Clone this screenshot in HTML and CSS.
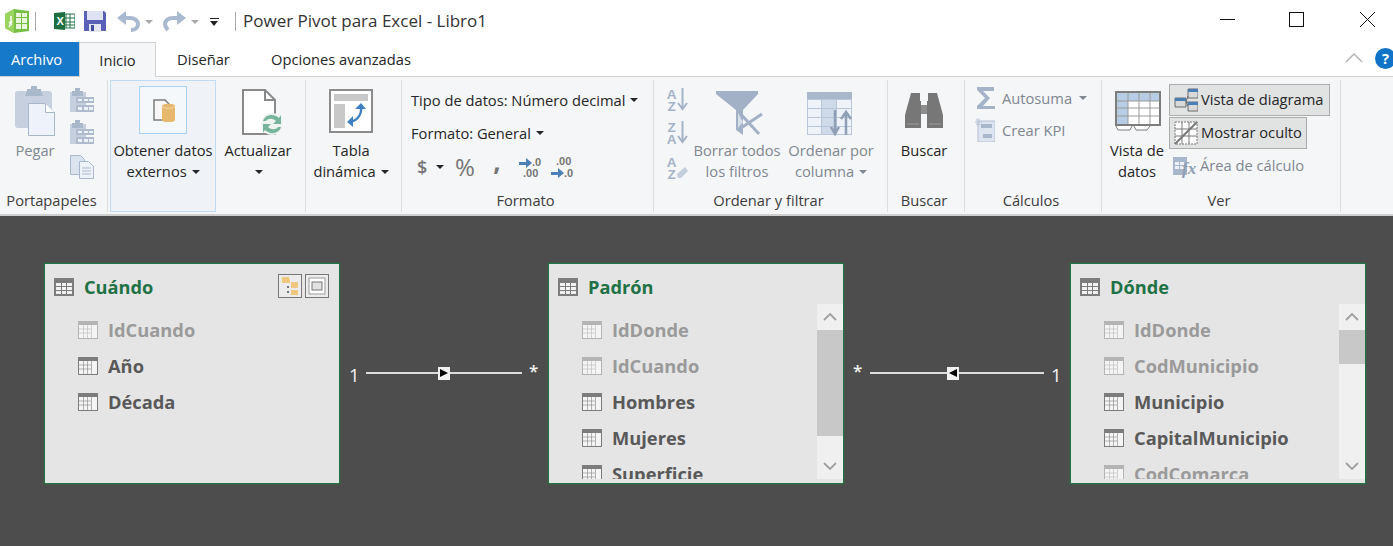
FILE: index.html
```html
<!DOCTYPE html>
<html lang="es">
<head>
  <meta charset="UTF-8" />
  <title>Power Pivot para Excel - Libro1</title>
  <link rel="stylesheet" href="styles.css">
</head>
<body>
  <svg class="defs" width="0" height="0">
    <symbol id="i-table" viewBox="0 0 20 18">
      <rect width="20" height="18" fill="currentColor" />
      <path d="M2 5h5v3H2zM8 5h4v3H8zM13 5h5v3h-5zM2 9h5v3H2zM8 9h4v3H8zM13 9h5v3h-5zM2 13h5v3H2zM8 13h4v3H8zM13 13h5v3h-5z" fill="#f2f2f2" />
    </symbol>
    <symbol id="i-field" viewBox="0 0 20 18">
      <rect width="20" height="18" fill="currentColor" />
      <rect x="1" y="4" width="18" height="13" fill="#f4f4f4" />
      <path d="M1 8h12M1 12h12M5.500 4v13M9.500 4v13M13.500 4v13" stroke="currentColor" stroke-opacity=".55" fill="none" />
    </symbol>
    <symbol id="i-clip" viewBox="0 0 24 24">
      <path d="M0 4h16v20H0z" fill="#c5cfdd" />
      <path d="M5 0h5v3h3v5H2V3h3z" fill="#a9b7ca" />
      <path d="M6 9h18v6H6zM6 17h18v7H6z" fill="#aebbcd" />
      <path d="M8 11h4v2H8zM14 11h4v2h-4zM19 11h4v2h-4zM8 19h4v3H8zM14 19h4v3h-4zM19 19h4v3h-4z" fill="#eef2f8" />
    </symbol>
    <symbol id="i-chevron" viewBox="0 0 14 8">
      <path d="M1 7l6-6 6 6" fill="none" stroke="#a0a0a0" stroke-width="1.800" />
    </symbol>
  </svg>

  <header class="titlebar">
    <svg class="qat-icon app-icon" width="24" height="24" viewBox="0 0 24 24">
      <path d="M0 5l9-5 15 2v20L9 24l-9-5z" fill="#78bf45" />
      <path d="M0 5l9-5v24l-9-5z" fill="#9ad55f" />
      <path d="M11 4h5v4h-5zM17 4h5v4h-5zM11 9h5v5h-5zM17 9h5v5h-5zM11 15h5v5h-5zM17 15h5v5h-5z" fill="#e9f6dc" />
      <path d="M6 7v8l-2-2M4 18l3-6" fill="none" stroke="#fff" stroke-width="1.500" />
    </svg>
    <span class="qat-sep"></span>
    <svg class="qat-icon excel-icon" width="21" height="18" viewBox="0 0 21 18">
      <path d="M9 2h12v14H9z" fill="#fff" stroke="#217346" />
      <path d="M12 2v14M16 2v14M9 6h12M9 10h12M9 13h12" stroke="#217346" fill="none" />
      <path d="M0 1l11-1v18L0 17z" fill="#1d6f42" />
      <text x="2.500" y="13" class="excel-x">X</text>
    </svg>
    <svg class="qat-icon save-icon" width="22" height="22" viewBox="0 0 22 22">
      <path d="M0 1h20l2 2v18H0z" fill="#5a5fb8" />
      <path d="M3 1h16v9H3z" fill="#dfe2f5" />
      <path d="M5 14h12v8H5z" fill="#e4e6f2" />
      <path d="M7 15h3v6H7z" fill="#454a9c" />
    </svg>
    <svg class="qat-icon undo-icon" width="23" height="21" viewBox="0 0 23 21">
      <path d="M0 7l9-7v14z" fill="#a9b9cf" />
      <path d="M7 7h6c5 0 8 3 8 6s-2 6-7 6" fill="none" stroke="#a9b9cf" stroke-width="4" />
    </svg>
    <span class="caret caret-qat"></span>
    <svg class="qat-icon redo-icon" width="23" height="21" viewBox="0 0 23 21">
      <path d="M23 7l-9-7v14z" fill="#a9b9cf" />
      <path d="M16 7h-6c-5 0-8 3-8 6 0 2 1 4 3 6" fill="none" stroke="#a9b9cf" stroke-width="4" />
    </svg>
    <span class="caret caret-qat"></span>
    <span class="customize"><span></span></span>
    <span class="qat-sep title-sep"></span>
    <span class="doc-title">Power Pivot para Excel - Libro1</span>
    <div class="window-controls">
      <svg width="15" height="15" viewBox="0 0 15 15"><path d="M0 7.500h15" stroke="#111" /></svg>
      <svg width="15" height="15" viewBox="0 0 15 15"><rect x=".5" y=".5" width="14" height="14" fill="none" stroke="#111" /></svg>
      <svg width="15" height="15" viewBox="0 0 15 15"><path d="M0 0l15 15M15 0L0 15" stroke="#111" /></svg>
    </div>
  </header>

  <nav class="tabs">
    <span class="tab tab-file">Archivo</span>
    <span class="tab tab-active">Inicio</span>
    <span class="tab tab-design">Diseñar</span>
    <span class="tab tab-adv">Opciones avanzadas</span>
    <svg class="collapse" width="18" height="10" viewBox="0 0 18 10"><path d="M1 9l8-8 8 8" fill="none" stroke="#b4b4b4" stroke-width="1.500" /></svg>
    <span class="help">?</span>
  </nav>

  <section class="ribbon">
    <div class="group g-clip">
      <div class="group-body">
        <div class="big off b-paste">
          <svg width="40" height="56" viewBox="0 0 40 56">
            <path d="M0 10a3 3 0 0 1 3-3h31a3 3 0 0 1 3 3v34H3a3 3 0 0 1-3-3z" fill="#c6d0de" />
            <path d="M12 7V5h4V2h6v3h4v2l2 5H10z" fill="#aab8cb" />
            <path d="M13.500 19.500h17l9 9v23h-26z" fill="#edf2fb" stroke="#a7b6ca" />
            <path d="M30.500 19.500v9h9" fill="#fff" stroke="#a7b6ca" />
          </svg>
          <span>Pegar</span>
        </div>
        <div class="clip-col">
          <svg width="24" height="24"><use href="#i-clip" /></svg>
          <svg width="24" height="24"><use href="#i-clip" /></svg>
          <svg width="24" height="24" viewBox="0 0 24 24">
            <path d="M.5.5h10l4 4v15H.500z" fill="#dbe3ee" stroke="#a9b7ca" />
            <path d="M9.500 6.500h9l5 5v12h-14z" fill="#eef2f9" stroke="#a9b7ca" />
            <path d="M12 13h9M12 16h9M12 19h9" stroke="#a9b7ca" />
          </svg>
        </div>
      </div>
      <div class="group-label">Portapapeles</div>
    </div>

    <div class="group g-data">
      <div class="group-body">
        <div class="hover-box">
          <div class="hover-icon">
            <svg width="24" height="24" viewBox="0 0 24 24">
              <path d="M3 2h11l4 4v16H3z" fill="#f7f7f7" stroke="#7d7d7d" stroke-width="1.500" />
              <path d="M11 8c0-3 13-3 13 0v14c0 3-13 3-13 0z" fill="#e6b96f" />
              <path d="M11 8c0 3 13 3 13 0" fill="none" stroke="#f3d7a8" />
            </svg>
          </div>
          <span>Obtener datos</span>
          <span>externos <i class="caret"></i></span>
        </div>
        <div class="big b-refresh">
          <svg width="42" height="56" viewBox="0 0 42 56">
            <path d="M1 6h22l10 10v34H1z" fill="#fff" stroke="#8a8a8a" stroke-width="2" />
            <path d="M23 6v10h10" fill="none" stroke="#8a8a8a" stroke-width="2" />
            <circle cx="30" cy="40" r="11" fill="#eef4f1" />
            <path d="M21 37c2-7 11-8 16-3l2-3v9h-8l3-3c-3-3-8-3-10 0zM39 43c-2 7-11 8-16 3l-2 3v-9h8l-3 3c3 3 8 3 10 0z" fill="#76b49b" />
          </svg>
          <span>Actualizar</span>
          <span><i class="caret"></i></span>
        </div>
      </div>
    </div>

    <div class="group g-pivot">
      <div class="group-body">
        <div class="big b-pivot">
          <svg width="44" height="56" viewBox="0 0 44 56">
            <rect x="1" y="6" width="42" height="42" fill="#fff" stroke="#8c8c8c" stroke-width="2" />
            <path d="M5 10h34v7H5zM5 20h11v24H5z" fill="#c8c8c8" />
            <path d="M32 22c1 8-3 14-11 16" fill="none" stroke="#3f80c2" stroke-width="2.500" />
            <path d="M26 25l6-6 5 6zM24 32l-6 6 6 5z" fill="#3f80c2" />
          </svg>
          <span>Tabla</span>
          <span>dinámica <i class="caret"></i></span>
        </div>
      </div>
    </div>

    <div class="group g-format">
      <div class="group-body format-body">
        <div class="format-row">Tipo de datos: Número decimal <i class="caret"></i></div>
        <div class="format-row">Formato: General <i class="caret"></i></div>
        <div class="format-row format-tools">
          <span class="sym sym-dollar">$</span>
          <i class="caret"></i>
          <span class="sym sym-pct">%</span>
          <span class="sym sym-comma">,</span>
          <svg width="24" height="22" viewBox="0 0 24 22">
            <path d="M0 6h7V2l6 5-6 5V9H0z" fill="#4b7fb5" />
            <text x="13" y="10" class="dec">.0</text>
            <text x="4" y="21" class="dec">.00</text>
          </svg>
          <svg width="24" height="22" viewBox="0 0 24 22">
            <text x="5" y="9" class="dec">.00</text>
            <path d="M0 16h7v-4l6 5-6 5v-3H0z" fill="#4b7fb5" />
            <text x="13" y="21" class="dec">.0</text>
          </svg>
        </div>
      </div>
      <div class="group-label">Formato</div>
    </div>

    <div class="group g-sort">
      <div class="group-body">
        <div class="sort-col">
          <div class="sort-icon">
            <span class="az">AZ</span>
            <svg width="11" height="24" viewBox="0 0 11 24"><path d="M5.500 1v20M1 16l4.500 6 4.500-6" fill="none" stroke="#a5b3c8" stroke-width="2" /></svg>
          </div>
          <div class="sort-icon">
            <span class="az">ZA</span>
            <svg width="11" height="24" viewBox="0 0 11 24"><path d="M5.500 1v20M1 16l4.500 6 4.500-6" fill="none" stroke="#a5b3c8" stroke-width="2" /></svg>
          </div>
          <div class="sort-icon">
            <span class="az">AZ</span>
            <svg width="11" height="24" viewBox="0 0 11 24"><path d="M0 19l8-7 3 4-7 7H1z" fill="#c3cedd" /></svg>
          </div>
        </div>
        <div class="big off b-filter">
          <svg width="47" height="56" viewBox="0 0 47 56">
            <path d="M0 7h42v3L27 26v25l-7-5V26L0 10z" fill="#a3b1c6" />
            <path d="M21 26l22 24M46 30L22 46" fill="none" stroke="#a3b1c6" stroke-width="3" />
            <path d="M22 29l5 9-5 6z" fill="#d6deea" />
          </svg>
          <span>Borrar todos</span>
          <span>los filtros</span>
        </div>
        <div class="big off b-bycol">
          <svg width="48" height="56" viewBox="0 0 48 56">
            <path d="M0 8h45v7H0z" fill="#a9b7cb" />
            <path d="M0 15h45v36H0z" fill="#b9c6d8" />
            <path d="M1 16h13v8H1zM30 16h14v8H30zM1 25h13v8H1zM30 25h14v8H30zM1 34h13v8H1zM30 34h14v8H30zM1 43h13v7H1zM30 43h14v7H30z" fill="#eef3fa" />
            <path d="M15 16h14v8H15zM15 25h14v8H15zM15 34h14v8H15zM15 43h14v7H15z" fill="#cfdae8" />
            <path d="M28 26v23M24 43l4 7 4-7" fill="none" stroke="#8f9fb6" stroke-width="2.500" />
            <path d="M39 51V29M34 35l5-7 5 7" fill="none" stroke="#8f9fb6" stroke-width="2.500" />
          </svg>
          <span>Ordenar por</span>
          <span>columna <i class="caret"></i></span>
        </div>
      </div>
      <div class="group-label">Ordenar y filtrar</div>
    </div>

    <div class="group g-find">
      <div class="group-body">
        <div class="big b-find">
          <svg width="40" height="56" viewBox="0 0 40 56">
            <path d="M7 9h9v8h1v27H1V31zM24 9h9l6 22v13H23V17h1z" fill="#777" />
            <path d="M17 21h6v9h-6z" fill="#8f8f8f" />
            <path d="M3 40h12M25 40h12" stroke="#9e9e9e" />
          </svg>
          <span>Buscar</span>
        </div>
      </div>
      <div class="group-label">Buscar</div>
    </div>

    <div class="group g-calc">
      <div class="group-body calc-body">
        <div class="tool-row off">
          <svg width="20" height="24" viewBox="0 0 20 24"><path d="M2 1h17v4H8l7 7-7 8h12v3H2v-3l8-8-8-8z" fill="#a5b3c9" /></svg>
          <span>Autosuma</span>
          <i class="caret"></i>
        </div>
        <div class="tool-row off">
          <svg width="20" height="24" viewBox="0 0 20 24">
            <path d="M3 3h17v21H3z" fill="#dde5f0" stroke="#b4c1d3" />
            <path d="M6 6h11v4H6zM8 16h9v4H8z" fill="#a9b7cb" />
            <path d="M3 0v8M0 4h7M1 1l4 6M5 1L1 7" stroke="#bcc8d8" />
          </svg>
          <span>Crear KPI</span>
        </div>
      </div>
      <div class="group-label">Cálculos</div>
    </div>

    <div class="group g-view">
      <div class="group-body">
        <div class="big b-grid">
          <svg width="46" height="56" viewBox="0 0 46 56">
            <path d="M0 7h46v35H0z" fill="#7d7d7d" />
            <path d="M2 9h42v31H2z" fill="#fff" />
            <path d="M2 9h42v8H2zM2 17h11v23H2z" fill="#b7cde6" />
            <path d="M13 9v31M24 9v31M35 9v31M2 17h42M2 24h42M2 32h42" stroke="#9a9a9a" fill="none" />
            <path d="M1 42l2 4h12l2-4M19 42l2 4h11l3-4" fill="#fff" stroke="#7d7d7d" />
          </svg>
          <span>Vista de</span>
          <span>datos</span>
        </div>
        <div class="view-col">
          <div class="tool-row toggled">
            <svg width="24" height="24" viewBox="0 0 24 24">
              <path d="M1 10h11v9H1zM14 1h10v9H14zM14 14h10v9H14z" fill="#d9d9d9" stroke="#6b6b6b" />
              <path d="M1 10h11v3H1zM14 1h10v3H14zM14 14h10v3H14z" fill="#4b7fb5" />
              <path d="M12 14h2M12 14l2-6M12 14l2 4" stroke="#6b6b6b" fill="none" />
            </svg>
            <span>Vista de diagrama</span>
          </div>
          <div class="tool-row toggled toggled-short">
            <svg width="24" height="24" viewBox="0 0 24 24">
              <rect x="1" y="1" width="22" height="22" fill="#fff" stroke="#777" stroke-dasharray="2 1" />
              <path d="M1 8h22M1 15h22M8 1v22M15 1v22" stroke="#777" />
              <path d="M1 23L23 1" stroke="#777" stroke-width="2" />
            </svg>
            <span>Mostrar oculto</span>
          </div>
          <div class="tool-row off">
            <svg width="24" height="24" viewBox="0 0 24 24">
              <path d="M0 3h14v18H0z" fill="#a9b7cb" />
              <path d="M2 8h4v3H2zM7 8h4v3H7zM2 12h4v3H2zM7 12h4v3H7z" fill="#eef2f8" />
              <text x="9" y="20" class="fx">fx</text>
            </svg>
            <span>Área de cálculo</span>
          </div>
        </div>
      </div>
      <div class="group-label">Ver</div>
    </div>
  </section>

  <main class="canvas">
    <article class="card card-when">
      <div class="card-head">
        <svg width="20" height="18"><use href="#i-table" /></svg>
        <h2>Cuándo</h2>
        <div class="card-btns">
          <span class="card-btn">
            <svg width="18" height="18" viewBox="0 0 18 18">
              <path d="M1 0h7v2h1v4H1zM10 5h7v6h-7zM10 13h7v5h-7z" fill="#f0c77e" />
              <path d="M6 9h2v2H6zM6 14h2v2H6z" fill="#777" />
            </svg>
          </span>
          <span class="card-btn">
            <svg width="18" height="18" viewBox="0 0 18 18">
              <rect x="1" y="1" width="16" height="16" fill="#fff" stroke="#999" />
              <rect x="4" y="5" width="10" height="8" fill="#e2e2e2" stroke="#777" />
            </svg>
          </span>
        </div>
      </div>
      <div class="card-body">
        <ul class="fields">
          <li class="hidden-field"><svg width="20" height="18"><use href="#i-field" /></svg><span>IdCuando</span></li>
          <li><svg width="20" height="18"><use href="#i-field" /></svg><span>Año</span></li>
          <li><svg width="20" height="18"><use href="#i-field" /></svg><span>Década</span></li>
        </ul>
      </div>
    </article>

    <div class="link link-left">
      <span class="link-one">1</span>
      <span class="link-line seg-72"></span>
      <span class="link-mark">
        <svg width="8" height="8" viewBox="0 0 8 8"><path d="M0 0l8 4-8 4z" fill="#000" /></svg>
      </span>
      <span class="link-line seg-72"></span>
      <span class="link-many">*</span>
    </div>

    <article class="card card-fact">
      <div class="card-head">
        <svg width="20" height="18"><use href="#i-table" /></svg>
        <h2>Padrón</h2>
      </div>
      <div class="card-body">
        <ul class="fields">
          <li class="hidden-field"><svg width="20" height="18"><use href="#i-field" /></svg><span>IdDonde</span></li>
          <li class="hidden-field"><svg width="20" height="18"><use href="#i-field" /></svg><span>IdCuando</span></li>
          <li><svg width="20" height="18"><use href="#i-field" /></svg><span>Hombres</span></li>
          <li><svg width="20" height="18"><use href="#i-field" /></svg><span>Mujeres</span></li>
          <li><svg width="20" height="18"><use href="#i-field" /></svg><span>Superficie</span></li>
        </ul>
        <div class="scrollbar">
          <span class="sb-btn"><svg width="14" height="8"><use href="#i-chevron" /></svg></span>
          <span class="sb-thumb thumb-long"></span>
          <span class="sb-track"></span>
          <span class="sb-btn sb-down"><svg width="14" height="8"><use href="#i-chevron" /></svg></span>
        </div>
      </div>
    </article>

    <div class="link link-right">
      <span class="link-many">*</span>
      <span class="link-line seg-77"></span>
      <span class="link-mark">
        <svg width="8" height="8" viewBox="0 0 8 8"><path d="M8 0L0 4l8 4z" fill="#000" /></svg>
      </span>
      <span class="link-line seg-85"></span>
      <span class="link-one">1</span>
    </div>

    <article class="card card-where">
      <div class="card-head">
        <svg width="20" height="18"><use href="#i-table" /></svg>
        <h2>Dónde</h2>
      </div>
      <div class="card-body">
        <ul class="fields">
          <li class="hidden-field"><svg width="20" height="18"><use href="#i-field" /></svg><span>IdDonde</span></li>
          <li class="hidden-field"><svg width="20" height="18"><use href="#i-field" /></svg><span>CodMunicipio</span></li>
          <li><svg width="20" height="18"><use href="#i-field" /></svg><span>Municipio</span></li>
          <li><svg width="20" height="18"><use href="#i-field" /></svg><span>CapitalMunicipio</span></li>
          <li class="hidden-field"><svg width="20" height="18"><use href="#i-field" /></svg><span>CodComarca</span></li>
        </ul>
        <div class="scrollbar">
          <span class="sb-btn"><svg width="14" height="8"><use href="#i-chevron" /></svg></span>
          <span class="sb-thumb thumb-short"></span>
          <span class="sb-track"></span>
          <span class="sb-btn sb-down"><svg width="14" height="8"><use href="#i-chevron" /></svg></span>
        </div>
      </div>
    </article>
  </main>
</body>
</html>
```

FILE: styles.css
```css
* {
  margin: 0;
  padding: 0;
  box-sizing: border-box;
}

body {
  width: 1393px;
  height: 546px;
  overflow: hidden;
  background-color: #fff;
  color: #262626;
  font-family: "Open Sans", "Liberation Sans", sans-serif;
  font-size: 14.700px;
}

.defs {
  position: absolute;
}

svg {
  display: block;
  flex-shrink: 0;
}

.caret {
  display: inline-block;
  width: 0;
  height: 0;
  border-left: 4px solid transparent;
  border-right: 4px solid transparent;
  border-top: 4px solid #262626;
  vertical-align: 3px;
  margin-left: 1px;
}

/* title bar */
.titlebar {
  display: flex;
  align-items: center;
  height: 42px;
  padding-left: 5px;
}

.qat-sep {
  width: 1px;
  height: 19px;
  margin: 0 18px 0 6px;
  background-color: #a8a8a8;
}

.excel-icon {
  margin-right: 9px;
}

.excel-x {
  font-family: "Liberation Sans", sans-serif;
  font-size: 11px;
  font-weight: bold;
  fill: #fff;
}

.save-icon {
  margin-right: 11px;
}

.caret-qat {
  margin: 2px 10px 0 5px;
  border-top-color: #a8a8a8;
}

.customize {
  display: block;
  width: 9px;
  height: 9px;
  margin: 2px 0 0 1px;
  border-top: 1px solid #222;
}

.customize span {
  display: block;
  width: 0;
  height: 0;
  margin-top: 2px;
  border-left: 4.500px solid transparent;
  border-right: 4.500px solid transparent;
  border-top: 5px solid #222;
}

.title-sep {
  margin: 0 7px 0 16px;
}

.doc-title {
  margin-top: -2px;
  font-size: 17px;
  color: #333;
}

.window-controls {
  display: flex;
  gap: 55px;
  margin-left: auto;
  margin-right: 18px;
  margin-top: -4px;
}

.window-controls svg:nth-child(2) {
  margin: 0 1px 0 -1px;
}

/* tabs */
.tabs {
  display: flex;
  align-items: stretch;
  height: 34px;
}

.tab {
  display: flex;
  align-items: center;
  justify-content: center;
}

.tab-file {
  width: 79px;
  padding-right: 6px;
  background-color: #1779c9;
  color: #fff;
}

.tab-active {
  width: 77px;
  margin-bottom: -1px;
  background-color: #f5f6f7;
  border: 1px solid #d2d2d2;
  border-bottom: none;
  position: relative;
}

.tab-design {
  width: 95px;
}

.tab-adv {
  padding-left: 20px;
}

.collapse {
  margin: 11px 0 0 auto;
}

.help {
  width: 21px;
  height: 21px;
  margin: 6px -3px 0 12px;
  flex-shrink: 0;
  border-radius: 50%;
  background-color: #1173c7;
  color: #fff;
  font-size: 15px;
  font-weight: bold;
  line-height: 21px;
  text-align: center;
}

/* ribbon */
.ribbon {
  display: flex;
  height: 140px;
  padding-top: 3px;
  background-color: #f5f6f7;
  border-top: 1px solid #d2d2d2;
  border-bottom: 2px solid #cfcfcf;
}

.group {
  display: flex;
  flex-direction: column;
  height: 132px;
  border-right: 1px solid #dcdfe2;
}

.group-body {
  flex: 1;
  display: flex;
  align-items: flex-start;
  padding-top: 4px;
}

.group-label {
  height: 22px;
  padding-right: 4px;
  line-height: 20px;
  text-align: center;
  color: #3d3d3d;
  white-space: nowrap;
}

.g-clip { width: 108px; }
.g-data { width: 198px; }
.g-pivot { width: 96px; }
.g-format { width: 252px; }
.g-sort { width: 234px; }
.g-find { width: 77px; }
.g-calc { width: 137px; }
.g-view { width: 239px; }

.big {
  display: flex;
  flex-direction: column;
  align-items: center;
  line-height: 21px;
  text-align: center;
  white-space: nowrap;
}

.big svg {
  height: 56px;
}

.off {
  color: #7f8791;
}

.off .caret {
  border-top-color: #7f8791;
}

.b-paste { width: 70px; }
.b-refresh { width: 84px; }
.b-refresh svg { margin-left: 9px; }
.b-pivot { width: 90px; }
.b-filter { width: 86px; }
.b-filter svg { margin-left: 5px; }
.b-bycol { width: 86px; margin-left: 8px; }
.b-find { width: 72px; }
.b-grid { width: 56px; margin-left: 7px; }
.b-grid svg { margin-left: 2px; }

.clip-col {
  display: flex;
  flex-direction: column;
  gap: 8px;
  padding-top: 4px;
}

.clip-col svg:last-child {
  margin-top: 3px;
}

/* highlighted button */
.g-data .group-body {
  padding-top: 0;
  padding-left: 2px;
}

.g-data .b-refresh {
  padding-top: 4px;
}

.hover-box {
  display: flex;
  flex-direction: column;
  align-items: center;
  width: 106px;
  height: 132px;
  line-height: 21px;
  background-color: #eff3f8;
  border: 1px solid #bfdcf4;
  white-space: nowrap;
}

.hover-icon {
  display: flex;
  align-items: center;
  justify-content: center;
  width: 48px;
  height: 48px;
  margin: 5px 0 6px;
  background-color: #f5f8fb;
  border: 1px solid #a9d3f5;
}

/* formato */
.format-body {
  flex-direction: column;
  padding-left: 9px;
}

.format-row {
  display: flex;
  align-items: center;
  gap: 4px;
  height: 33px;
  padding-bottom: 2px;
  white-space: nowrap;
}

.format-tools {
  gap: 0;
  padding-left: 6px;
  padding-bottom: 0;
}

.sym {
  color: #757575;
  font-weight: 600;
}

.sym-dollar {
  width: 18px;
  font-size: 18px;
}

.sym-pct {
  width: 28px;
  margin-left: 7px;
  font-size: 24px;
  font-weight: 400;
  text-align: center;
}

.sym-comma {
  width: 36px;
  margin-bottom: 12px;
  font-size: 26px;
  font-weight: 700;
  line-height: 18px;
  text-align: center;
}

.format-tools svg {
  margin-left: 4px;
}

.format-tools svg + svg {
  margin-left: 8px;
}

.dec {
  font-family: "Liberation Sans", sans-serif;
  font-size: 11px;
  font-weight: bold;
  fill: #757575;
}

/* one word set upright, so the two letters stay a single text */
.az {
  width: 12px;
  height: 24px;
  font-family: "Liberation Sans", sans-serif;
  font-size: 13.500px;
  font-weight: bold;
  line-height: 12px;
  letter-spacing: -3px;
  color: #a5b3c8;
  writing-mode: vertical-lr;
  text-orientation: upright;
}

.fx {
  font-family: "Liberation Serif", serif;
  font-size: 17px;
  font-style: italic;
  font-weight: bold;
  fill: #8e9eb5;
}

/* ordenar */
.sort-col {
  display: flex;
  flex-direction: column;
  gap: 9px;
  width: 29px;
  margin-left: 11px;
  padding-top: 3px;
}

.sort-icon {
  display: flex;
  height: 24px;
}

.sort-icon:last-child {
  margin-top: 2px;
}

/* small rows */
.calc-body {
  flex-direction: column;
  padding-left: 10px;
  padding-top: 2px;
}

.tool-row {
  display: flex;
  align-items: center;
  height: 32px;
  white-space: nowrap;
}

.tool-row svg {
  margin-right: 7px;
}

.tool-row span {
  padding-bottom: 1px;
}

.tool-row .caret {
  margin-left: 7px;
}

.view-col {
  display: flex;
  flex-direction: column;
  gap: 1px;
  margin-left: 4px;
}

.view-col .tool-row {
  align-self: flex-start;
  padding: 0 6px 0 4px;
}

.view-col .tool-row svg {
  margin-right: 3px;
}

.view-col .tool-row span {
  padding-bottom: 2px;
}

.view-col .toggled-short {
  padding-right: 4px;
}

.toggled {
  background-color: #e1e3e3;
  border: 1px solid #ababab;
}

/* diagram */
.canvas {
  position: relative;
  height: 330px;
  background-color: #4d4d4d;
}

.card {
  position: absolute;
  top: 47px;
  display: flex;
  flex-direction: column;
  width: 296px;
  height: 221px;
  background-color: #e5e5e5;
  border: 1px solid #217346;
  box-shadow: 0 0 0 1px rgba(33, 115, 70, .3);
}

.card-when { left: 44px; }
.card-fact { left: 548px; }
.card-where { left: 1070px; }

.card-head {
  display: flex;
  align-items: center;
  height: 40px;
  padding: 6px 10px 0 9px;
  color: #7c7c7c;
}

.card-head h2 {
  margin-left: 10px;
  font-size: 18.200px;
  font-weight: 700;
  color: #1f7146;
}

.card-btns {
  display: flex;
  gap: 3px;
  margin-left: auto;
  margin-top: -2px;
}

.card-btn {
  display: flex;
  align-items: center;
  justify-content: center;
  width: 24px;
  height: 24px;
  border: 1px solid #777;
  background-color: #ececec;
}

.card-body {
  display: flex;
  height: 175px;
  overflow: hidden;
}

.fields {
  flex: 1;
  list-style: none;
  padding: 8px 0 0 33px;
}

.fields li {
  display: flex;
  align-items: center;
  height: 36px;
  font-size: 18.300px;
  font-weight: 700;
  color: #595959;
  white-space: nowrap;
}

.fields li span {
  margin-top: -2px;
}

.fields li svg {
  margin-right: 10px;
  color: #7c7c7c;
}

.fields .hidden-field {
  color: #9a9a9a;
}

.fields .hidden-field svg {
  color: #b4b4b4;
}

.scrollbar {
  display: flex;
  flex-direction: column;
  width: 26px;
  background-color: #f0f0f0;
}

.sb-btn {
  display: flex;
  align-items: center;
  justify-content: center;
  height: 26px;
  flex-shrink: 0;
}

.sb-down svg {
  transform: rotate(180deg);
}

.sb-thumb {
  background-color: #c8c8c8;
}

.thumb-long { height: 106px; }
.thumb-short { height: 34px; }

.sb-track {
  flex: 1;
}

.link {
  position: absolute;
  top: 146px;
  display: flex;
  align-items: center;
  height: 22px;
  color: #f2f2f2;
}

.link-left { left: 349px; }
.link-right { left: 853px; }

.link-one {
  width: 10px;
  margin-top: 4px;
  font-size: 18.500px;
  line-height: 22px;
}

.link-many {
  width: 10px;
  margin-top: -4px;
  font-size: 17px;
  font-weight: 600;
  line-height: 16px;
}

.link-left .link-one { margin-right: 7px; }
.link-left .link-many { margin-left: 7px; }
.link-right .link-one { margin-left: 7px; }
.link-right .link-many { margin-right: 7px; }

.link-line {
  height: 2px;
  background-color: #dcdcdc;
}

.seg-72 { width: 72px; }
.seg-77 { width: 77px; }
.seg-85 { width: 85px; }

.link-mark {
  display: flex;
  align-items: center;
  justify-content: center;
  width: 12px;
  height: 13px;
  background-color: #f0f0f0;
}
```
